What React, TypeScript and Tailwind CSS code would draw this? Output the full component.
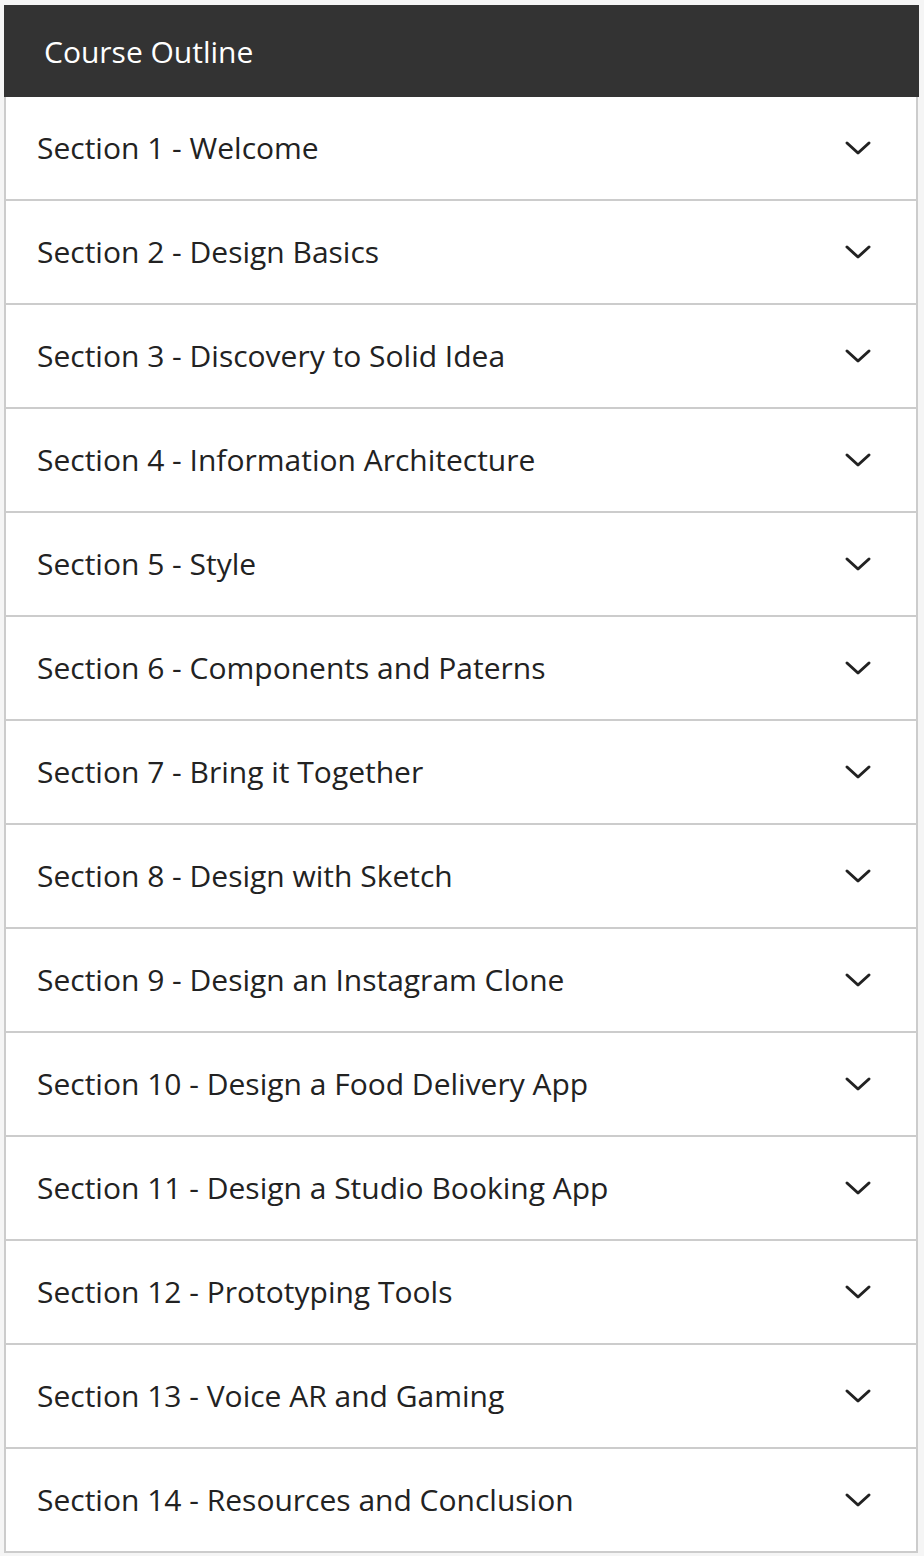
import React from "react";

const sections = [
  "Section 1 - Welcome",
  "Section 2 - Design Basics",
  "Section 3 - Discovery to Solid Idea",
  "Section 4 - Information Architecture",
  "Section 5 - Style",
  "Section 6 - Components and Paterns",
  "Section 7 - Bring it Together",
  "Section 8 - Design with Sketch",
  "Section 9 - Design an Instagram Clone",
  "Section 10 - Design a Food Delivery App",
  "Section 11 - Design a Studio Booking App",
  "Section 12 - Prototyping Tools",
  "Section 13 - Voice AR and Gaming",
  "Section 14 - Resources and Conclusion",
];

function Chevron() {
  return (
    <svg width="28" height="16" viewBox="0 0 28 16" fill="none">
      <path d="M3 3 L14 13 L25 3" stroke="#222" strokeWidth="3" strokeLinecap="round" strokeLinejoin="round" />
    </svg>
  );
}

export default function App() {
  return (
    <div className="min-h-[1556px] bg-[#f5f5f5] pt-[5px] pl-[4px] pr-[5px]" style={{ fontFamily: '"Open Sans", sans-serif' }}>
      <div className="w-[915px]">
        <div className="h-[92px] bg-[#333333] flex items-center pl-[40px] text-white text-[30px]">
          Course Outline
        </div>
        <div className="border-x-2 border-[#cccccc] bg-white mr-[1px]">
          {sections.map((s) => (
            <div key={s} className="h-[104px] border-b-2 border-[#cccccc] flex items-center justify-between pl-[31px] pr-[44px] text-[30px] text-[#222222]">
              <span className="-mt-[2px]">{s}</span>
              <Chevron />
            </div>
          ))}
        </div>
      </div>
    </div>
  );
}
